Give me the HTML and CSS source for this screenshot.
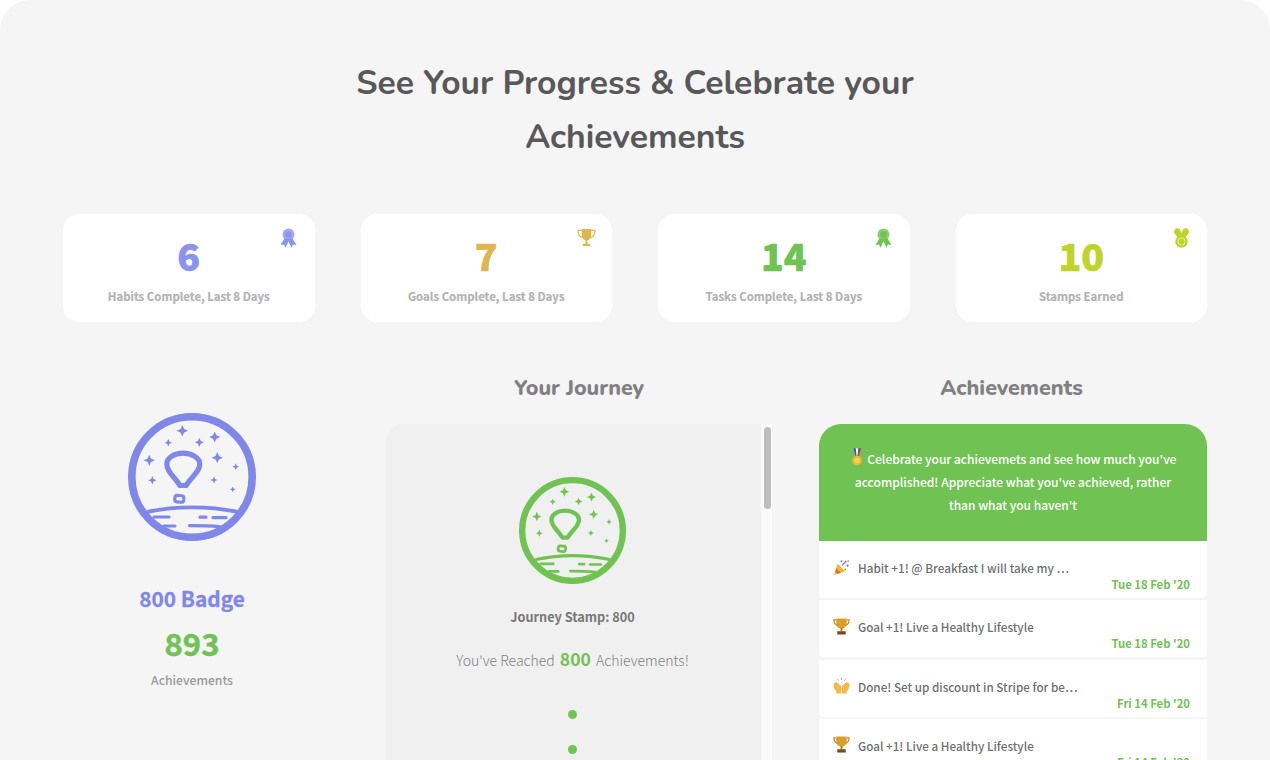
FILE: index.html
```html
<!DOCTYPE html>
<html lang="en">
<head>
  <meta charset="UTF-8">
  <meta name="viewport" content="width=device-width, initial-scale=1.0">
  <title>See Your Progress</title>
  <link rel="stylesheet" href="styles.css">
</head>
<body>
  <svg class="none" aria-hidden="true">
    <path id="star" d="M0-1 .3-.3 1 0 .3.3 0 1-.3.3-1 0-.3-.3z"/>
    <symbol id="badge" viewBox="0 0 128 128">
      <circle cx="64" cy="64" r="60.2" fill="none" stroke="currentColor" stroke-width="7.600"/>
      <g fill="currentColor">
        <use href="#star" transform="translate(54.300 17.700) scale(5.800)"/>
        <use href="#star" transform="translate(40.300 29.700) scale(3.800)"/>
        <use href="#star" transform="translate(71.300 29.300) scale(4.600)"/>
        <use href="#star" transform="translate(86.700 24) scale(5.600)"/>
        <use href="#star" transform="translate(89.300 44.700) scale(5.600)"/>
        <use href="#star" transform="translate(21.300 47.300) scale(5.600)"/>
        <use href="#star" transform="translate(107.700 53.700) scale(3.400)"/>
        <use href="#star" transform="translate(24.300 67.300) scale(4.200)"/>
        <use href="#star" transform="translate(86 67) scale(3.600)"/>
        <use href="#star" transform="translate(104.700 76.300) scale(2.900)"/>
      </g>
      <g fill="none" stroke="currentColor" stroke-linecap="round" stroke-linejoin="round">
        <path d="M52 72.500C46 63 38.800 59 38.800 51 38.800 45 46 40.200 55 40.200S71.800 45 71.800 51C71.800 59 64 63 58 72.500z" stroke-width="5.200"/>
        <rect x="46.800" y="82.500" width="9" height="6.500" rx="2.500" stroke-width="3.200" transform="rotate(6 51 86)"/>
        <path d="M20.500 98.700c27-5.800 60-5.800 88 0" stroke-width="3.800"/>
        <path d="M26 104h15M72 104.200h6M85 104.700h13M36 113h11M61.500 112.600c11 0 21 .2 30 1" stroke-width="3.200"/>
      </g>
    </symbol>
    <symbol id="trophy" viewBox="0 0 18 18">
      <path d="M3.500.5h11V6c0 3-2.800 5.300-5.500 5.300S3.500 9 3.500 6z" fill="#dc9f28"/>
      <path d="M3.500 2H1c0 3.300 1.200 5 4 5.800M14.500 2H17c0 3.300-1.200 5-4 5.800" fill="none" stroke="#c98a1f" stroke-width="1.300"/>
      <path d="M8 10.500h2V14H8z" fill="#b3761a"/>
      <path d="M4.500 14h9v3.500h-9z" fill="#7a4a17"/>
    </symbol>
    <symbol id="rosette" viewBox="0 0 18 20">
      <path d="M5 10.500 1 17l3.500-.5L6 19.800l3-6.500 3 6.500 1.500-3.300 3.500.5-4-6.500z" fill="currentColor"/>
      <circle cx="9" cy="6.500" r="6" fill="currentColor" opacity=".8"/>
      <circle cx="9" cy="6.500" r="3.200" fill="currentColor"/>
    </symbol>
  </svg>

  <main class="page">
    <h1 class="title">See Your Progress &amp; Celebrate your<br>Achievements</h1>

    <section class="stats">
      <div class="stat stat-purple">
        <svg class="stat-icon"><use href="#rosette"/></svg>
        <div class="stat-num">6</div>
        <div class="stat-label">Habits Complete, Last 8 Days</div>
      </div>
      <div class="stat stat-gold">
        <svg class="stat-icon" viewBox="0 0 20 20"><path d="M5 .5h10V7c0 3-2 5-4 5.500V16h3v2.500H6V16h3v-3.500C7 12 5 10 5 7z" fill="currentColor"/><path d="M5 2H1c0 4 1.500 6.500 5 7.500M15 2h4c0 4-1.500 6.500-5 7.500" fill="none" stroke="currentColor" stroke-width="1.300"/></svg>
        <div class="stat-num">7</div>
        <div class="stat-label">Goals Complete, Last 8 Days</div>
      </div>
      <div class="stat stat-green">
        <svg class="stat-icon"><use href="#rosette"/></svg>
        <div class="stat-num">14</div>
        <div class="stat-label">Tasks Complete, Last 8 Days</div>
      </div>
      <div class="stat stat-lime">
        <svg class="stat-icon" viewBox="0 0 18 20"><path d="M3.500 0 7 .8 9 5l2-4.200L14.500 0 17 4l-4.500 6h-7L1 4z" fill="currentColor"/><circle cx="9" cy="13.500" r="6.200" fill="currentColor"/><circle cx="9" cy="13.500" r="3.600" fill="none" stroke="#fff" stroke-width=".6"/></svg>
        <div class="stat-num">10</div>
        <div class="stat-label">Stamps Earned</div>
      </div>
    </section>

    <section class="columns">
      <div class="level">
        <svg class="level-badge"><use href="#badge"/></svg>
        <div class="level-name">800 Badge</div>
        <div class="level-count">893</div>
        <div class="level-label">Achievements</div>
      </div>

      <div class="journey">
        <h2 class="col-title">Your Journey</h2>
        <div class="journey-box">
          <div class="journey-panel">
            <svg class="journey-badge"><use href="#badge"/></svg>
            <div class="journey-stamp">Journey Stamp: 800</div>
            <div class="journey-text">You've Reached <b>800</b> Achievements!</div>
            <span class="dot"></span>
            <span class="dot"></span>
          </div>
          <div class="scroll"><div class="scroll-thumb"></div></div>
        </div>
      </div>

      <div class="achieve">
        <h2 class="col-title">Achievements</h2>
        <div class="banner">
          <svg class="emoji-inline" viewBox="0 0 16 20"><path d="M4 0h8l-2.500 9h-3z" fill="#3d4fa8"/><path d="M6.500 0h3l-1 9h-1z" fill="#fff"/><path d="M11 0h2l-3 9H8.500z" fill="#c8403c"/><circle cx="8" cy="14" r="5.500" fill="#f2b632"/><circle cx="8" cy="14" r="3" fill="#fbd25c"/></svg>
          Celebrate your achievemets and see how much you've accomplished! Appreciate what you've achieved, rather than what you haven't
        </div>
        <ul class="feed">
          <li class="feed-item">
            <div class="feed-row">
              <svg class="emoji" viewBox="0 0 18 18"><path d="M1 17 5 5l8 8z" fill="#f2b632"/><path d="M3.500 10 8 14.500l-3 1.200-2.500-2.500z" fill="#d9663a"/><path d="M10 7c1-3 3-3 4-5" fill="none" stroke="#d9445a" stroke-width="1.300"/><circle cx="9" cy="2.500" r="1.100" fill="#4f9fe0"/><circle cx="15.500" cy="7" r="1.100" fill="#d9445a"/><circle cx="13" cy="11" r=".9" fill="#6fbf4f"/><circle cx="16" cy="2" r=".8" fill="#6a5bc4"/></svg>
              <span class="feed-text">Habit +1! @ Breakfast I will take my …</span>
            </div>
            <div class="feed-date">Tue 18 Feb '20</div>
          </li>
          <li class="feed-item">
            <div class="feed-row">
              <svg class="emoji"><use href="#trophy"/></svg>
              <span class="feed-text">Goal +1! Live a Healthy Lifestyle</span>
            </div>
            <div class="feed-date">Tue 18 Feb '20</div>
          </li>
          <li class="feed-item">
            <div class="feed-row">
              <svg class="emoji" viewBox="0 0 18 18"><path d="M.6 8.500C.6 6 3 5 4.500 6l4.100 3.500v8h-5.100V15C1.500 13.500.6 11.500.6 8.500z" fill="#f5b945"/><path d="M17.400 8.500C17.400 6 15 5 13.500 6L9.400 9.500v8h5.100V15c2-1.500 2.900-3.500 2.900-6.500z" fill="#f5b945"/><path d="M5 2.500l.6 1.200M9 1.200v1.500M13 2.500l-.6 1.200" stroke="#7a7a7a" stroke-width=".9" fill="none"/></svg>
              <span class="feed-text">Done! Set up discount in Stripe for be…</span>
            </div>
            <div class="feed-date">Fri 14 Feb '20</div>
          </li>
          <li class="feed-item">
            <div class="feed-row">
              <svg class="emoji"><use href="#trophy"/></svg>
              <span class="feed-text">Goal +1! Live a Healthy Lifestyle</span>
            </div>
            <div class="feed-date">Fri 14 Feb '20</div>
          </li>
        </ul>
      </div>
    </section>
  </main>
</body>
</html>
```

FILE: styles.css
```css
*{
  margin: 0;
  padding: 0;
  box-sizing: border-box;
}

:root{
  --green:#70c353;
  --purple:#7f87ea;
  --source:"Noto Sans CJK JP","Noto Sans",sans-serif;
  --round:"Nunito","Noto Sans","Open Sans",sans-serif;
}

html,body{
  height: 760px;
  overflow: hidden;
  background: #fff;
}

.none{
  display: none;
}

.page{
  height: 760px;
  overflow: hidden;
  padding: 56px 63px 0;
  background: #f5f5f5;
  border-radius: 30px 30px 0 0;
  font-family: var(--source);
}

/* titulo */
.title{
  font-family: var(--round);
  font-size: 33.7px;
  font-weight: 700;
  line-height: 54px;
  color: #585858;
  text-align: center;
}

/* tarjetas */
.stats{
  display: grid;
  grid-template-columns: repeat(4,1fr);
  gap: 46px;
  margin-top: 50px;
}

.stat{
  position: relative;
  height: 108px;
  padding-top: 18px;
  background: #fff;
  border-radius: 16px;
  text-align: center;
}

.stat-icon{
  position: absolute;
  top: 14px;
  right: 17px;
  width: 19px;
  height: 20px;
}

.stat-num{
  font-size: 37.5px;
  font-weight: 900;
  line-height: 46px;
  -webkit-text-stroke: .6px currentColor;
}

.stat-label{
  margin-top: 9px;
  font-size: 11.4px;
  font-weight: 700;
  line-height: 18px;
  color: #b3b3b3;
  -webkit-text-stroke: .2px #b3b3b3;
}

.stat-purple{ color: #8b93ec; }
.stat-gold{ color: #dcb74f; }
.stat-green{ color: var(--green); }
.stat-lime{ color: #c0d32a; }
.stat-gold .stat-icon,
.stat-lime .stat-icon{ right: 16px; }

/* columnas */
.columns{
  display: flex;
  margin-top: 50px;
}

.col-title{
  font-family: var(--round);
  font-size: 21.5px;
  font-weight: 800;
  line-height: 32px;
  color: #808080;
  text-align: center;
}

.level{
  width: 258px;
  padding-top: 41px;
  text-align: center;
}

.level-badge{
  display: block;
  width: 128px;
  height: 128px;
  margin: 0 auto;
  color: var(--purple);
}

.level-name{
  margin-top: 41px;
  font-size: 20.8px;
  font-weight: 700;
  line-height: 32px;
  color: var(--purple);
  -webkit-text-stroke: .3px currentColor;
}

.level-count{
  margin-top: 9px;
  font-size: 31px;
  font-weight: 700;
  line-height: 40px;
  color: var(--green);
  -webkit-text-stroke: .5px currentColor;
}

.level-label{
  margin-top: 7px;
  font-size: 12.2px;
  font-weight: 500;
  line-height: 20px;
  color: #999;
}

/* journey */
.journey{
  width: 386px;
  margin-left: 65px;
}

.journey-box{
  display: flex;
  height: 400px;
  margin-top: 20px;
}

.journey-panel{
  flex: 1;
  padding: 53px 2px 0 0;
  background: #f0f0f0;
  border-radius: 16px 0 0 0;
  text-align: center;
}

.journey-badge{
  display: block;
  width: 107px;
  height: 107px;
  margin: 0 auto;
  color: var(--green);
}

.journey-stamp{
  margin-top: 22px;
  font-size: 12.7px;
  font-weight: 700;
  line-height: 22px;
  color: #777;
}

.journey-text{
  margin-top: 18px;
  font-size: 14px;
  font-weight: 300;
  line-height: 26px;
  color: #808080;
}

.journey-text b{
  margin: 0 2px;
  font-size: 17.5px;
  font-weight: 700;
  color: var(--green);
}

.dot{
  display: block;
  width: 9px;
  height: 9px;
  margin: 26px auto 0;
  border-radius: 50%;
  background: var(--green);
}

.journey-text + .dot{
  margin-top: 37px;
}

.scroll{
  width: 11px;
  padding: 3px 1px 0 3px;
  background: #fafafa;
}

.scroll-thumb{
  height: 82px;
  background: #bdbdbd;
  border-radius: 4px;
}

/* logros */
.achieve{
  width: 388px;
  margin-left: 47px;
}

.achieve .col-title{
  padding-right: 3px;
}

.banner{
  height: 117px;
  margin-top: 20px;
  padding: 23px 24px 0;
  background: var(--green);
  border-radius: 22px 22px 0 0;
  font-size: 12px;
  font-weight: 500;
  line-height: 23px;
  color: #fff;
  text-align: center;
}

.emoji{
  flex: none;
  width: 17px;
  height: 17px;
  margin-top: -2px;
}

.emoji-inline{
  width: 14px;
  height: 18px;
  margin-right: 1px;
  vertical-align: -2px;
}

.feed{
  list-style: none;
}

.feed-item{
  height: 57px;
  margin-bottom: 2.3px;
  padding: 18px 17px 0 14px;
  background: #fff;
  border-radius: 0 0 4px 4px;
}

.feed-row{
  display: flex;
  align-items: center;
  gap: 8px;
  height: 18px;
}

.feed-text{
  font-size: 11.7px;
  font-weight: 500;
  line-height: 18px;
  color: #6f6f6f;
}

.feed-date{
  margin-top: -2px;
  font-size: 11.3px;
  font-weight: 700;
  line-height: 18px;
  color: var(--green);
  text-align: right;
}
```
